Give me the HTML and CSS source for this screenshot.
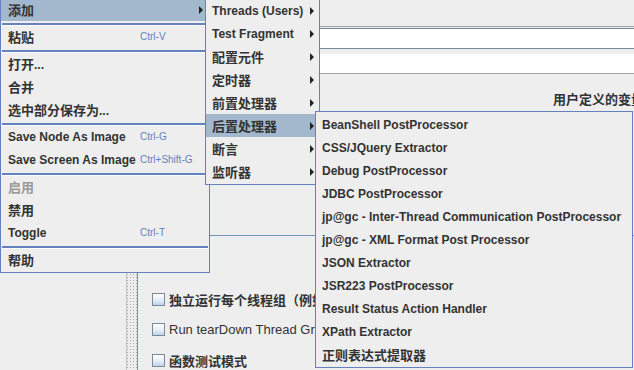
FILE: index.html
```html
<!DOCTYPE html>
<html>
<head>
<meta charset="utf-8">
<link rel="stylesheet" href="styles.css">
</head>
<body>
<div class="app">
  <div class="tree"></div>
  <div class="splitter"></div>
  <div class="main">
    <div class="topbar"></div>
    <div class="rule"></div>
    <div class="spacer"></div>
    <div class="field field-a"></div>
    <div class="gap"></div>
    <div class="field field-b"></div>
    <div class="title"><span class="zh">用户定义的变量</span></div>
    <div class="table"></div>
    <div class="checks">
      <div class="check"><span class="box"></span><span class="zh-label">独立运行每个线程组（例如在一个组运行结束后启动下一个）</span></div>
      <div class="check"><span class="box"></span><span class="en-label">Run tearDown Thread Groups after shutdown of main threads</span></div>
      <div class="check"><span class="box"></span><span class="zh-label">函数测试模式</span></div>
    </div>
  </div>
</div>

<div class="menu menu-main">
  <div class="item selected"><span class="label zh">添加</span><span class="arrow"></span></div>
  <div class="sep"></div>
  <div class="item"><span class="label zh">粘贴</span><span class="accel">Ctrl-V</span></div>
  <div class="sep"></div>
  <div class="item"><span class="label"><span class="zh">打开</span>...</span></div>
  <div class="item"><span class="label zh">合并</span></div>
  <div class="item"><span class="label"><span class="zh">选中部分保存为</span>...</span></div>
  <div class="sep"></div>
  <div class="item"><span class="label">Save Node As Image</span><span class="accel">Ctrl-G</span></div>
  <div class="item"><span class="label">Save Screen As Image</span><span class="accel">Ctrl+Shift-G</span></div>
  <div class="sep"></div>
  <div class="item disabled"><span class="label zh">启用</span></div>
  <div class="item"><span class="label zh">禁用</span></div>
  <div class="item"><span class="label">Toggle</span><span class="accel">Ctrl-T</span></div>
  <div class="sep"></div>
  <div class="item"><span class="label zh">帮助</span></div>
</div>

<div class="menu menu-sub">
  <div class="sitem"><span>Threads (Users)</span><span class="arrow"></span></div>
  <div class="sitem"><span>Test Fragment</span><span class="arrow"></span></div>
  <div class="sitem"><span class="zh">配置元件</span><span class="arrow"></span></div>
  <div class="sitem"><span class="zh">定时器</span><span class="arrow"></span></div>
  <div class="sitem"><span class="zh">前置处理器</span><span class="arrow"></span></div>
  <div class="sitem selected"><span class="zh">后置处理器</span><span class="arrow"></span></div>
  <div class="sitem"><span class="zh">断言</span><span class="arrow"></span></div>
  <div class="sitem"><span class="zh">监听器</span><span class="arrow"></span></div>
</div>

<div class="menu menu-post">
  <div class="pitem">BeanShell PostProcessor</div>
  <div class="pitem">CSS/JQuery Extractor</div>
  <div class="pitem">Debug PostProcessor</div>
  <div class="pitem">JDBC PostProcessor</div>
  <div class="pitem">jp@gc - Inter-Thread Communication PostProcessor</div>
  <div class="pitem">jp@gc - XML Format Post Processor</div>
  <div class="pitem">JSON Extractor</div>
  <div class="pitem">JSR223 PostProcessor</div>
  <div class="pitem">Result Status Action Handler</div>
  <div class="pitem">XPath Extractor</div>
  <div class="pitem"><span class="zh">正则表达式提取器</span></div>
</div>
</body>
</html>
```

FILE: styles.css
```css
* { box-sizing: border-box; }
html, body { margin: 0; padding: 0; }
body {
  width: 634px;
  height: 370px;
  overflow: hidden;
  position: relative;
  background: #eeeeee;
  color: #333333;
  font-family: "Liberation Sans", "Noto Sans CJK SC", sans-serif;
}

.zh { font-size: 13px; font-family: "Noto Sans CJK SC", sans-serif; }

/* background application */
.app { display: flex; height: 370px; }
.tree { width: 127px; background: #eeeeee; border-right: 1px solid #c6c6c6; }
.splitter {
  width: 10px;
  background-color: #eeeeee;
  background-image: radial-gradient(circle, #a8a8a8 0.6px, transparent 1px);
  background-size: 3px 3px;
  background-position: 2px 0;
}
.main {
  flex: 1;
  min-width: 0;
  border-left: 1px solid #7a8fc2;
  display: flex;
  flex-direction: column;
  white-space: nowrap;
  overflow: hidden;
}
.topbar { height: 26px; }
.rule { height: 1px; background: #a4a4a4; }
.spacer { height: 1px; }
.field { background: #ffffff; }
.field-a { height: 21px; border-top: 1px solid #7a8a99; border-bottom: 1px solid #7a8a99; }
.gap { height: 5px; }
.field-b { height: 20px; border-bottom: 1px solid #a4a4a4; }
.title {
  height: 50px;
  display: flex;
  align-items: center;
  padding-left: 415px;
  font-weight: bold;
  overflow: hidden;
}
.table { height: 113px; border-bottom: 1px solid #7a8fc2; }
.checks {
  padding: 53px 0 0 14px;
  display: flex;
  flex-direction: column;
  gap: 10.5px;
}
.check {
  height: 20px;
  width: 163px;
  display: flex;
  align-items: center;
  overflow: hidden;
}
.box {
  width: 13px;
  height: 13px;
  flex: none;
  border: 1px solid #7a8a99;
  background: linear-gradient(#ffffff, #e6eef7 55%, #bfd3e8);
  margin-right: 4px;
}
.zh-label, .en-label { min-width: 0; overflow: hidden; }
.zh-label { font-family: "Noto Sans CJK SC", sans-serif; font-size: 13px; font-weight: bold; }
.en-label { font-size: 13px; }

/* popup menus */
.menu {
  position: absolute;
  background: #eeeeee;
  border: 1px solid #6382bf;
  padding: 1px 0;
  font-weight: bold;
  font-size: 12px;
  white-space: nowrap;
}
.menu-main { left: 0; top: -4px; width: 210px; }
.menu-sub { left: 205px; top: -3px; width: 115px; }
.menu-post { left: 315px; top: 111px; width: 318px; }

.item {
  height: 23px;
  display: grid;
  grid-template-columns: 132px 1fr auto;
  align-items: center;
  padding: 0 6px 0 7px;
}
.item .arrow { grid-column: 3; }
.accel { grid-column: 2; font-weight: normal; font-size: 10px; color: #6382bf; }
.selected { background: #a3b8cc; }
.disabled { color: #9a9a9a; }

.sep { height: 4px; padding-top: 2px; margin: 0 1px; }
.sep::before {
  content: "";
  display: block;
  height: 2px;
  background: #6382bf;
  border-bottom: 1px solid #ffffff;
}

.sitem {
  height: 23px;
  display: flex;
  align-items: center;
  justify-content: space-between;
  padding: 0 5px 0 6px;
}
.arrow {
  width: 0;
  height: 0;
  border-left: 4px solid #222222;
  border-top: 4px solid transparent;
  border-bottom: 4px solid transparent;
}

.pitem {
  height: 23px;
  display: flex;
  align-items: center;
  padding: 0 6px;
}
```
